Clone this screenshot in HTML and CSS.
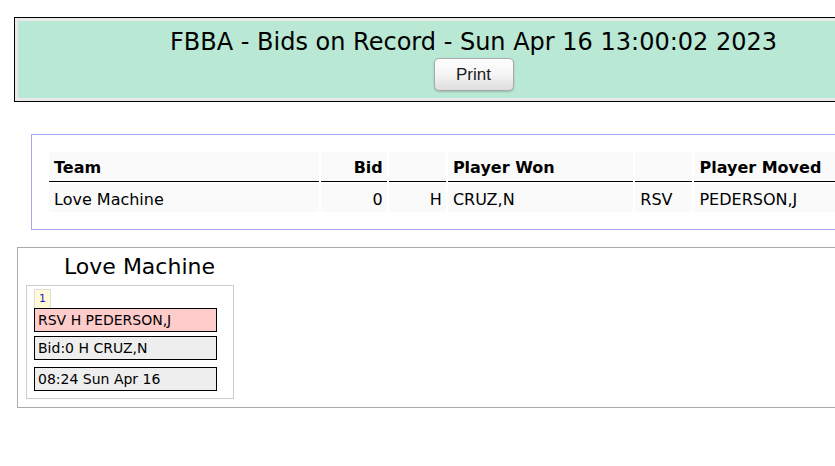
FILE: index.html
```html
<!DOCTYPE html>
<html>
<head>
<meta charset="utf-8">
<title>FBBA - Bids on Record</title>
<link rel="stylesheet" href="styles.css">
</head>
<body>
<div class="banner">
  <div class="banner-in">
    <h1 class="title">FBBA - Bids on Record - Sun Apr 16 13:00:02 2023</h1>
    <button class="print-btn" type="button">Print</button>
  </div>
</div>

<div class="bids-box">
  <table class="bids">
    <colgroup>
      <col class="c-team">
      <col class="c-bid">
      <col class="c-pos">
      <col class="c-won">
      <col class="c-stat">
      <col class="c-moved">
    </colgroup>
    <thead>
      <tr>
        <th>Team</th>
        <th class="num">Bid</th>
        <th></th>
        <th>Player Won</th>
        <th></th>
        <th>Player Moved</th>
      </tr>
    </thead>
    <tbody>
      <tr>
        <td>Love Machine</td>
        <td class="num">0</td>
        <td class="num">H</td>
        <td>CRUZ,N</td>
        <td class="stat">RSV</td>
        <td>PEDERSON,J</td>
      </tr>
    </tbody>
  </table>
</div>

<div class="team-box">
  <h2 class="team-name">Love Machine</h2>
  <div class="team-card">
    <div class="tab">1</div>
    <div class="entry moved">RSV H PEDERSON,J</div>
    <div class="entry bid">Bid:0 H CRUZ,N</div>
    <div class="entry stamp">08:24 Sun Apr 16</div>
  </div>
</div>
</body>
</html>
```
FILE: styles.css
```css
html, body {
  margin: 0;
  padding: 0;
  background: #fff;
  overflow: hidden;
}

body {
  font-family: "DejaVu Sans", Verdana, sans-serif;
  color: #000;
  padding-top: 17px;
}

/* page banner */
.banner {
  margin-left: 14px;
  width: 911px;
  border: 1px solid #000;
  padding: 3px;
  background: #e9e9e9;
}

.banner-in {
  background: #b9e8d5;
  text-align: center;
  padding: 6px 0 7px;
}

.title {
  margin: 0;
  font-size: 24px;
  line-height: 30px;
  font-weight: normal;
}

.print-btn {
  margin-top: 1px;
  display: inline-block;
  width: 80px;
  height: 33px;
  border: 1px solid #a9a9a9;
  border-radius: 5px;
  background: linear-gradient(#ffffff, #f4f4f4 50%, #dedede);
  box-shadow: 0 1px 2px rgba(0,0,0,0.2);
  font-family: "Liberation Sans Narrow", "Liberation Sans", Arial, sans-serif;
  font-size: 17px;
  color: #1a1a1a;
  padding: 0;
}

/* bids table */
.bids-box {
  margin: 32px 0 0 31px;
  width: 900px;
  border: 1px solid #a6a6ee;
  padding: 15px;
}

.bids {
  border-collapse: separate;
  border-spacing: 2px;
  table-layout: fixed;
  width: 867px;
  font-size: 16px;
}

.c-team { width: 269px; }
.c-bid { width: 66px; }
.c-pos { width: 57px; }
.c-won { width: 185px; }
.c-stat { width: 57px; }
.c-moved { width: 217px; }

.bids th,
.bids td {
  background: #fafafa;
  text-align: left;
  padding: 6px 4px 2px 5px;
  line-height: 20px;
  white-space: nowrap;
}

.bids th {
  font-weight: bold;
  padding-bottom: 3px;
  border-bottom: 1px solid #000;
}

.bids .num { text-align: right; }

/* per-team summary */
.team-box {
  margin: 17px 0 0 17px;
  width: 900px;
  border: 1px solid #aaa;
  padding: 0 8px 8px;
}

.team-name {
  margin: 0;
  padding: 5px 0 4px 38px;
  font-size: 22px;
  line-height: 28px;
  font-weight: normal;
}

.team-card {
  width: 183px;
  border: 1px solid #ccc;
  padding: 3px 16px 7px 7px;
}

.tab {
  width: 15px;
  height: 18px;
  border: 1px solid #ddd;
  border-bottom: none;
  background: #fffbd6;
  color: #2222cc;
  font-size: 11px;
  line-height: 18px;
  text-align: center;
}

.entry {
  border: 1px solid #000;
  height: 22px;
  line-height: 22px;
  padding-left: 3px;
  font-size: 14px;
}

.moved { background: #ffcccc; }
.bid { background: #eeeeee; margin-top: 4px; }
.stamp { background: #eeeeee; margin-top: 7px; }
```
